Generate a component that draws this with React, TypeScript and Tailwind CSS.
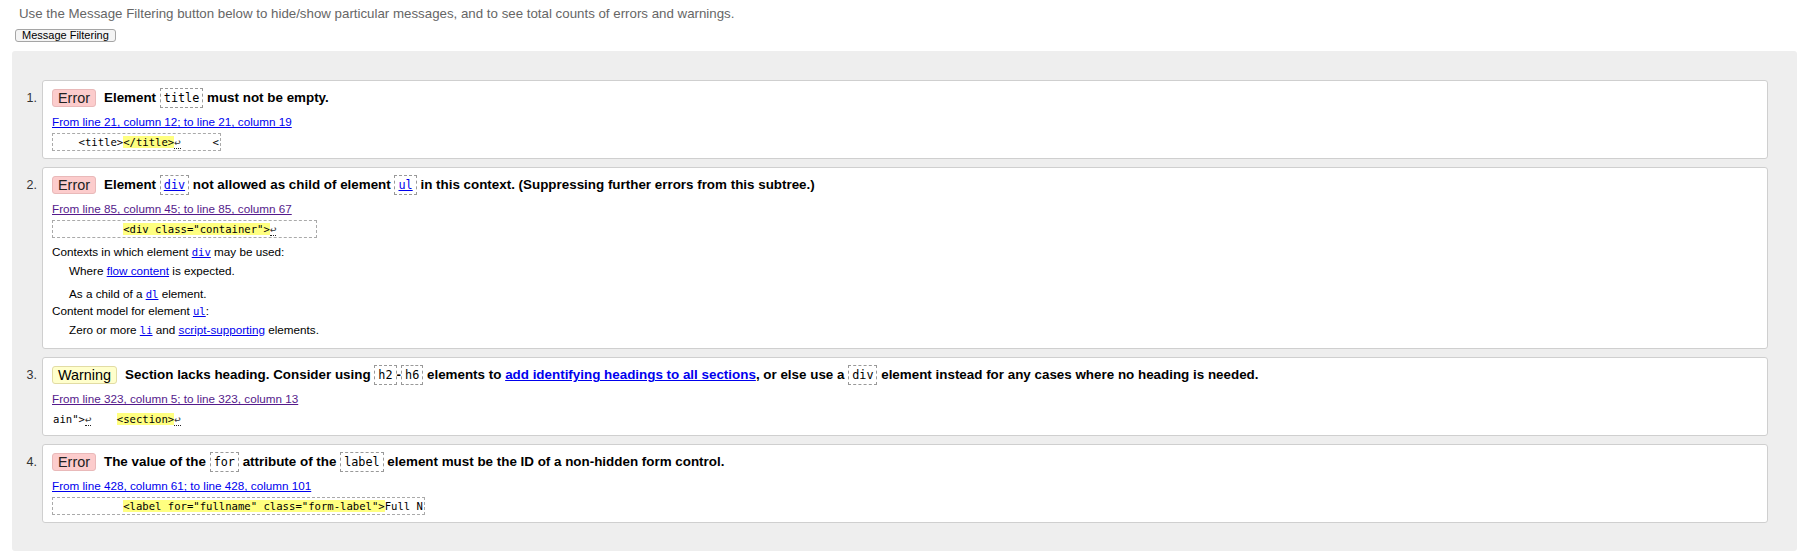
import type { ReactNode } from 'react'

const mono = "font-['DejaVu_Sans_Mono','Liberation_Mono',monospace]"

function Badge({ kind }: { kind: 'Error' | 'Warning' }) {
  return kind === 'Error' ? (
    <span className="rounded-[3px] border border-[#e9b9b9] bg-[#fccccc] px-[5px] text-[14.4px] leading-[16px] text-[#222]">
      Error
    </span>
  ) : (
    <span className="rounded-[3px] border border-[#e2dca4] bg-[#ffffcc] px-[5px] text-[14.4px] leading-[16px] text-black">
      Warning
    </span>
  )
}

function Code({ children, link }: { children: ReactNode; link?: boolean }) {
  return (
    <code
      className={`${mono} inline-block h-[20px] border border-dashed border-[#999] px-[3px] align-top text-[11.8px] leading-[18px] font-normal ${
        link ? 'text-[#0000ee] underline' : 'text-black'
      }`}
    >
      {children}
    </code>
  )
}

function Lf() {
  return <span className="border-b border-dotted border-[#222] text-[#333]">↩</span>
}

function Hl({ children }: { children: ReactNode }) {
  return <span className="bg-[#ffff80]">{children}</span>
}

function Extract({ children, boxed = true }: { children: ReactNode; boxed?: boolean }) {
  return (
    <div
      className={`${mono} mt-[4px] h-[18px] w-fit whitespace-pre border border-dashed pr-[1px] text-[10.6px] leading-[16px] text-black ${
        boxed ? 'border-[#aaa]' : 'border-transparent'
      }`}
    >
      {children}
    </div>
  )
}

function Loc({ children, visited }: { children: ReactNode; visited?: boolean }) {
  return (
    <a
      href="#"
      className={`mt-[7px] block w-fit text-[11.7px] leading-[14px] underline ${
        visited ? 'text-[#551a8b]' : 'text-[#0000ee]'
      }`}
    >
      {children}
    </a>
  )
}

function Message({ n, kind, title, loc, visited, extract, boxed, children }: {
  n: number
  kind: 'Error' | 'Warning'
  title: ReactNode
  loc: string
  visited?: boolean
  extract: ReactNode
  boxed?: boolean
  children?: ReactNode
}) {
  return (
    <li className="flex">
      <div className="w-[30px] shrink-0 pr-[5px] pt-[11px] text-right text-[12.5px] leading-[14px] text-[#333]">{n}.</div>
      <div className={`flex-1 rounded-[3px] border border-[#cfcfcf] bg-white pl-[9px] pt-[7px] ${children ? 'pb-[11px]' : 'pb-[7px]'}`}>
        <div className="flex h-[20px] items-center gap-[8px]">
          <Badge kind={kind} />
          <span className="whitespace-nowrap text-[13.4px] font-bold leading-[20px] text-black">{title}</span>
        </div>
        <Loc visited={visited}>{loc}</Loc>
        <Extract boxed={boxed}>{extract}</Extract>
        {children}
      </div>
    </li>
  )
}

function Ref({ children, code }: { children: ReactNode; code?: boolean }) {
  return (
    <a href="#" className={`text-[#0000ee] underline ${code ? `${mono} text-[10.6px]` : ''}`}>
      {children}
    </a>
  )
}

export default function App() {
  return (
    <div className="min-h-[559px] w-full bg-white pt-[6px] font-['Liberation_Sans',Arial,sans-serif]">
      <p className="pl-[19px] text-[13.3px] leading-[16px] text-[#666]">
        Use the Message Filtering button below to hide/show particular messages, and to see total counts of errors and warnings.
      </p>
      <button className="ml-[15px] mt-[7px] flex h-[13px] items-center rounded-[3px] border border-[#a5a5a5] bg-[#f4f4f4] px-[6px] text-[11px] leading-[11px] text-black">
        Message Filtering
      </button>
      <div className="ml-[12px] mr-[18px] mt-[9px] rounded-[3px] bg-[#eeeeee] pb-[28px] pr-[29px] pt-[29px]">
        <ol className="flex flex-col gap-[8px]">
          <Message
            n={1}
            kind="Error"
            title={<>Element <Code>title</Code> must not be empty.</>}
            loc="From line 21, column 12; to line 21, column 19"
            extract={<>{'    <title>'}<Hl>{'</title>'}</Hl><Lf />{'     <'}</>}
          />
          <Message
            n={2}
            kind="Error"
            visited
            title={
              <>
                Element <Code link>div</Code> not allowed as child of element <Code link>ul</Code> in this context. (Suppressing further errors from this subtree.)
              </>
            }
            loc="From line 85, column 45; to line 85, column 67"
            extract={<>{'           '}<Hl>{'<div class="container">'}</Hl><Lf />{'      '}</>}
          >
            <div className="mt-[7px] text-[11.7px] leading-[14px] text-black">
              Contexts in which element <Ref code>div</Ref> may be used:
            </div>
            <div className="mt-[5px] pl-[17px] text-[11.7px] leading-[14px] text-black">
              Where <Ref>flow content</Ref> is expected.
            </div>
            <div className="mt-[9px] pl-[17px] text-[11.7px] leading-[14px] text-black">
              As a child of a <Ref code>dl</Ref> element.
            </div>
            <div className="mt-[3px] text-[11.7px] leading-[14px] text-black">
              Content model for element <Ref code>ul</Ref>:
            </div>
            <div className="mt-[5px] pl-[17px] text-[11.7px] leading-[14px] text-black">
              Zero or more <Ref code>li</Ref> and <Ref>script-supporting</Ref> elements.
            </div>
          </Message>
          <Message
            n={3}
            kind="Warning"
            visited
            boxed={false}
            title={
              <>
                Section lacks heading. Consider using <Code>h2</Code>-<Code>h6</Code> elements to{' '}
                <a href="#" className="text-[#0000ee] underline">add identifying headings to all sections</a>, or else use a <Code>div</Code> element instead for any cases where no heading is needed.
              </>
            }
            loc="From line 323, column 5; to line 323, column 13"
            extract={<>{'ain">'}<Lf />{'    '}<Hl>{'<section>'}</Hl><Lf /></>}
          />
          <Message
            n={4}
            kind="Error"
            title={
              <>
                The value of the <Code>for</Code> attribute of the <Code>label</Code> element must be the ID of a non-hidden form control.
              </>
            }
            loc="From line 428, column 61; to line 428, column 101"
            extract={<>{'           '}<Hl>{'<label for="fullname" class="form-label">'}</Hl>{'Full N'}</>}
          />
        </ol>
      </div>
    </div>
  )
}
